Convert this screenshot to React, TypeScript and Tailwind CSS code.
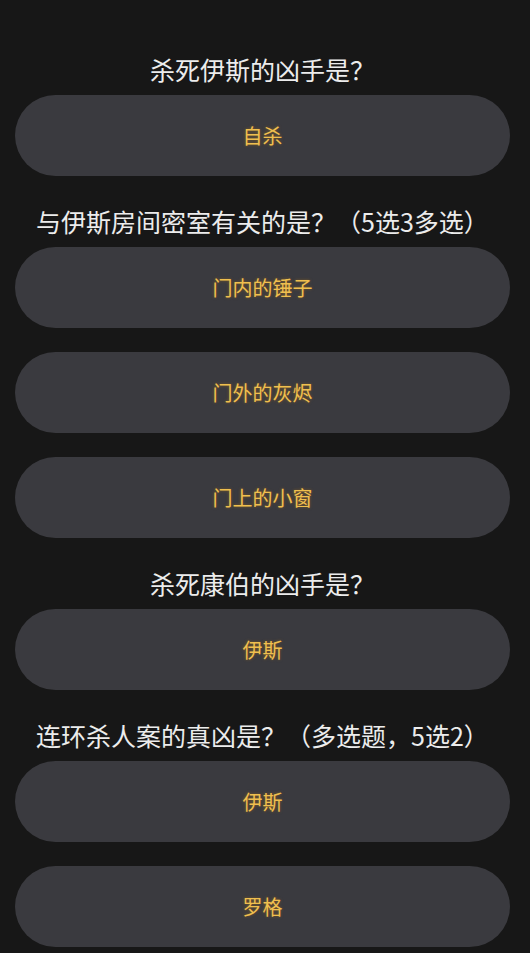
import React from "react";

type Question = {
  title: string;
  options: string[];
};

const questions: Question[] = [
  { title: "杀死伊斯的凶手是？", options: ["自杀"] },
  {
    title: "与伊斯房间密室有关的是？（5选3多选）",
    options: ["门内的锤子", "门外的灰烬", "门上的小窗"],
  },
  { title: "杀死康伯的凶手是？", options: ["伊斯"] },
  {
    title: "连环杀人案的真凶是？（多选题，5选2）",
    options: ["伊斯", "罗格"],
  },
];

export default function App() {
  return (
    <div
      className="min-h-[953px] w-[530px] overflow-hidden bg-[#171717] pl-[15px] pr-[20px] pt-[48px]"
      style={{ fontFamily: '"Noto Sans CJK SC", "Noto Sans", sans-serif' }}
    >
      {questions.map((q) => (
        <div key={q.title}>
          <div className="flex h-[47px] items-center justify-center whitespace-nowrap pb-[4px] text-[25px] leading-none text-[#ececec]">
            {q.title}
          </div>
          {q.options.map((opt) => (
            <button
              key={opt}
              type="button"
              className="mb-6 flex h-[81px] w-full items-center justify-center rounded-full bg-[#3a3a3f] text-[20px] text-[#efbf4f] [text-shadow:0_0_3px_rgba(180,120,20,0.6)]"
            >
              {opt}
            </button>
          ))}
        </div>
      ))}
    </div>
  );
}
